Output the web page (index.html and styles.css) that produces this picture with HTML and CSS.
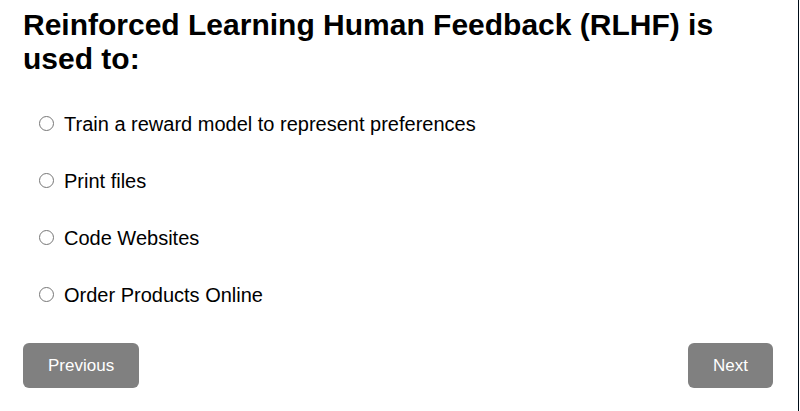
FILE: index.html
```html
<!DOCTYPE html>
<html lang="en">
<head>
<meta charset="utf-8">
<title>Quiz</title>
<link rel="stylesheet" href="styles.css">
</head>
<body>
<form class="quiz">
  <fieldset class="question">
    <legend class="title">Reinforced Learning Human Feedback (RLHF) is used to:</legend>
    <div class="options">
      <label class="option"><input type="radio" name="answer"><span>Train a reward model to represent preferences</span></label>
      <label class="option"><input type="radio" name="answer"><span>Print files</span></label>
      <label class="option"><input type="radio" name="answer"><span>Code Websites</span></label>
      <label class="option"><input type="radio" name="answer"><span>Order Products Online</span></label>
    </div>
  </fieldset>
  <div class="actions">
    <button type="button" class="btn">Previous</button>
    <button type="button" class="btn">Next</button>
  </div>
</form>
</body>
</html>
```
FILE: styles.css
```css
* {
  box-sizing: border-box;
}

body {
  margin: 0;
  background: #fff;
  color: #000;
  font-family: "Liberation Sans", Arial, sans-serif;
}

.quiz {
  min-height: 100vh;
  margin-right: 1px;
  padding: 8px 25px 22px 23px;
  border-right: 1px solid #000c18;
}

.question {
  min-width: 0;
  margin: 0;
  padding: 0;
  border: 0;
}

.title {
  padding: 0;
  font-size: 30px;
  font-weight: bold;
  line-height: 34px;
}

.options {
  display: grid;
  gap: 34px;
  padding: 37px 16px 36px;
}

.option {
  display: flex;
  align-items: flex-start;
  gap: 10px;
  font-size: 20px;
  line-height: 23px;
}

.option input {
  width: 15px;
  height: 15px;
  margin: 3px 0 0;
}

.actions {
  display: flex;
  justify-content: space-between;
}

.btn {
  padding: 12px 25px;
  border: 0;
  border-radius: 6px;
  background: #808080;
  color: #fff;
  font: 17px/21px "Liberation Sans", Arial, sans-serif;
}
```
